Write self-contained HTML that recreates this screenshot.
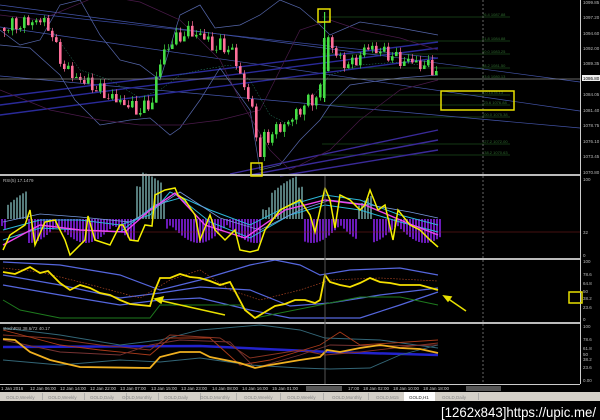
<!DOCTYPE html>
<html><head><meta charset="utf-8"><style>
html,body{margin:0;padding:0;background:#000;width:600px;height:420px;overflow:hidden}
svg{display:block}
text{font-family:"Liberation Sans",sans-serif}
</style></head><body>
<svg id="s" width="600" height="420" viewBox="0 0 600 420" xmlns="http://www.w3.org/2000/svg">
<rect width="600" height="420" fill="#000"/>
<g id="g"></g>
<g id="cand"></g>
<rect x="0" y="174" width="580" height="2" fill="#bbb"/>
<rect x="0" y="258" width="580" height="2" fill="#bbb"/>
<rect x="0" y="322" width="580" height="2" fill="#bbb"/>
<line x1="580.5" y1="0" x2="580.5" y2="384" stroke="#ccc" stroke-width="1"/>
<line x1="0" y1="384.5" x2="580" y2="384.5" stroke="#ccc"/>
<line x1="483" y1="0" x2="483" y2="384" stroke="#666" stroke-dasharray="2,2"/>
<line x1="325" y1="176" x2="325" y2="384" stroke="#555"/>
<line x1="0" y1="79" x2="580" y2="79" stroke="#888" stroke-width="0.7"/>
<g fill="none" stroke="#e8e000" stroke-width="1.5">
<rect x="318" y="9" width="12" height="13"/>
<rect x="251" y="163" width="11" height="13"/>
<rect x="441" y="91" width="73" height="19"/>
<rect x="569" y="292" width="13" height="11"/>
</g>
<g stroke="#e8e000" stroke-width="1.5">
<line x1="225" y1="315" x2="158" y2="300"/><polygon points="155,299 163,297 161,303" fill="#e8e000"/>
<line x1="466" y1="311" x2="447" y2="298"/><polygon points="444,296 451,297 448,301" fill="#e8e000"/>
</g>
<g font-size="4.5" fill="#bbb">
<text x="583" y="4">1099.85</text><text x="583" y="19">1097.20</text><text x="583" y="35">1094.60</text>
<text x="583" y="50">1092.00</text><text x="583" y="65">1089.35</text>
<rect x="582" y="75" width="18" height="6" fill="#eee"/><text x="583" y="80" fill="#000">1086.80</text>
<text x="583" y="96">1084.05</text><text x="583" y="112">1081.40</text><text x="583" y="127">1078.75</text>
<text x="583" y="143">1076.10</text><text x="583" y="158">1073.45</text><text x="583" y="174">1070.80</text>
<text x="583" y="181">100</text><text x="583" y="234">32</text><text x="583" y="257">0</text>
<text x="583" y="263">100</text><text x="583" y="276">78.6</text><text x="583" y="285">64.8</text><text x="583" y="293">50</text>
<text x="583" y="300">38.2</text><text x="583" y="309">23.6</text><text x="583" y="321">0</text>
<text x="583" y="328">100</text><text x="583" y="341">78.6</text><text x="583" y="350">61.8</text><text x="583" y="356">50</text>
<text x="583" y="361">38.2</text><text x="583" y="369">23.6</text><text x="583" y="382">0.00</text>
<text x="3" y="182">RSI(5) 17.1479</text>
<text x="3" y="330">stochRSI 38.6/72 40.17</text>
</g>
<g font-size="4.5" fill="#ccc">
<text x="1" y="390">1 Jan 2016</text><text x="30" y="390">12 Jan 06:00</text><text x="60" y="390">12 Jan 14:00</text>
<text x="90" y="390">12 Jan 22:00</text><text x="120" y="390">13 Jan 07:00</text><text x="151" y="390">13 Jan 15:00</text>
<text x="181" y="390">13 Jan 23:00</text><text x="212" y="390">14 Jan 08:00</text><text x="242" y="390">14 Jan 16:00</text>
<text x="272" y="390">15 Jan 01:00</text><rect x="306" y="386" width="36" height="5" fill="#555"/>
<text x="348" y="390">17:00</text><text x="363" y="390">18 Jan 02:00</text><text x="393" y="390">18 Jan 10:00</text>
<text x="423" y="390">18 Jan 18:00</text><rect x="466" y="386" width="35" height="5" fill="#555"/>
</g>
<rect x="0" y="392" width="600" height="9" fill="#d4d0c8"/>
<g font-size="4.5" fill="#888" id="tabs"></g>
<rect x="404" y="392" width="31" height="9" fill="#fff"/>
<text x="409" y="399" font-size="4.5" fill="#333">GOLD,H1</text>
<text x="441" y="417" font-size="14" fill="#fff" textLength="155" lengthAdjust="spacingAndGlyphs">[1262x843]https://upic.me/</text>
</svg>
<script>
(function(){
var NS="http://www.w3.org/2000/svg",G=document.getElementById('g'),C=document.getElementById('cand');
function pl(p,c,w,d,par){var e=document.createElementNS(NS,'polyline');e.setAttribute('points',p.map(function(a){return a.join(',')}).join(' '));e.setAttribute('fill','none');e.setAttribute('stroke',c);e.setAttribute('stroke-width',w||1);if(d)e.setAttribute('stroke-dasharray',d);(par||G).appendChild(e);}
function ln(a,b,c,d,col,w){pl([[a,b],[c,d]],col,w);}
function interp(k,x){for(var i=0;i<k.length-1;i++){if(x>=k[i][0]&&x<=k[i+1][0]){var t=(x-k[i][0])/(k[i+1][0]-k[i][0]);return k[i][1]+t*(k[i+1][1]-k[i][1]);}}return k[k.length-1][1];}
function rect(x,y,w,h,c,par){var e=document.createElementNS(NS,'rect');e.setAttribute('x',x);e.setAttribute('y',y);e.setAttribute('width',w);e.setAttribute('height',Math.max(h,0.5));e.setAttribute('fill',c);(par||G).appendChild(e);}
function txt(x,y,s,c,fs,par){var e=document.createElementNS(NS,'text');e.setAttribute('x',x);e.setAttribute('y',y);e.setAttribute('font-size',fs);e.setAttribute('fill',c);e.textContent=s;(par||G).appendChild(e);}
[[17,'76.4'],[41,'61.8'],[54,'50.0'],[68,'38.2'],[79,'23.6'],[95,'0.0'],[105,'-23.6'],[117,'100.0'],[144,'127.2'],[155,'138.2']].forEach(function(f){ln(322,f[0],510,f[0],'#1a4a1a',0.7);txt(482,f[0]-1,f[1]+' 10'+(90-f[0]/8).toFixed(2),'#2f6a2f',4);});
ln(0,5,580,82,'#4455aa',0.7);ln(0,27,580,111,'#4455aa',0.7);ln(0,76,580,128,'#4455aa',0.7);ln(0,10,438,58,'#3a4aa0',0.7);
ln(0,97,438,42,'#2a2a99',1.4);ln(0,105,438,48,'#2a2a99',1.4);ln(0,115,438,58,'#2a2a99',1.4);
ln(230,174,438,130,'#3a2a99',1.4);ln(250,175,438,140,'#3a2a99',1.4);ln(280,176,438,150,'#3a2a99',1.4);
pl([[0,30],[20,45],[40,40],[60,5],[80,0],[100,35],[120,60],[140,65],[160,80],[180,15],[200,5],[215,28],[240,25],[260,15],[280,0],[300,8],[320,25],[330,35],[360,22],[400,28],[438,35]],'#5566aa',0.7);
pl([[0,45],[30,48],[60,75],[75,100],[100,125],[130,120],[150,118],[170,135],[180,128],[200,100],[220,68],[250,110],[260,170],[280,165],[300,140],[320,120],[330,105],[350,85],[370,82],[400,78],[438,75]],'#5566aa',0.7);
pl([[0,15],[40,20],[100,-5],[140,2],[180,20],[220,60],[240,100],[255,125],[270,150],[290,170],[330,150],[360,120],[400,90],[438,80]],'#4a1a4a',0.7);
pl([[0,90],[50,110],[100,120],[140,125],[180,125],[220,120],[260,110],[300,30],[330,20],[360,30],[400,38],[438,50]],'#4a1a4a',0.7);
pl([[50,28],[80,70],[110,80],[140,98],[160,90],[180,75],[200,70],[230,65],[250,80],[270,115],[290,125],[310,100],[330,75],[360,65],[400,62],[438,68]],'#2a8a6a',0.5,'1.5,1.5');
var K=[[3,28],[20,24],[30,22],[40,20],[50,30],[55,50],[60,62],[70,75],[80,80],[90,85],[100,92],[110,98],[120,102],[130,107],[138,111],[145,107],[152,100],[155,80],[160,58],[165,48],[172,42],[180,35],[190,32],[200,36],[207,40],[213,50],[220,45],[227,48],[233,57],[238,70],[243,88],[248,100],[253,118],[256,140],[259,156],[262,140],[268,136],[274,130],[280,128],[286,122],[292,118],[298,110],[304,104],[310,100],[316,96],[322,82],[325,40],[328,38],[333,52],[338,60],[344,62],[350,66],[356,58],[362,52],[368,46],[374,50],[380,52],[386,53],[392,57],[398,60],[404,62],[410,60],[416,64],[422,66],[428,66],[434,70],[438,76]];
var prev=28;
for(var i=0;i<110;i++){var x=3+i*4;if(x>438)break;var c=interp(K,x)+Math.sin(i*2.3)*5+Math.cos(i*1.7)*3;var o=prev;var tp=Math.min(o,c),bt=Math.max(o,c);var col=c<o?'#44dd44':'#ff6f9a';rect(x+1,tp-Math.abs(Math.sin(i*3.1))*4-1,0.7,bt-tp+Math.abs(Math.cos(i*1.3))*5+2,col,C);rect(x,tp,2.6,bt-tp,col,C);prev=c;}
rect(324,12,1.2,90,'#44dd44',C);rect(323,38,2.6,60,'#44dd44',C);
var base=219;
for(var x2=1;x2<440;x2+=3){var h;if((x2>5&&x2<28)||(x2>133&&x2<165)||(x2>260&&x2<303)||(x2>355&&x2<372)){h=-(Math.abs(Math.sin(x2/28))*25+8);if(x2>140&&x2<162)h-=15;if(x2>270&&x2<298)h-=12;rect(x2,base+h,2,-h,'#557b7b');}else{h=Math.abs(Math.sin(x2/18))*18+6;rect(x2,base,2,h,'#6a1ab8');}}
ln(0,232,580,232,'#882222',0.6);
var Y=[[3,250],[10,235],[25,225],[30,210],[35,245],[45,222],[55,220],[65,240],[70,255],[85,240],[88,216],[95,240],[110,245],[120,225],[123,225],[130,240],[138,241],[145,225],[152,226],[155,195],[165,190],[175,188],[178,195],[185,200],[195,215],[200,240],[210,215],[215,230],[225,240],[235,230],[240,250],[250,252],[258,250],[265,230],[280,210],[300,200],[310,215],[315,232],[325,188],[330,200],[335,228],[340,195],[350,200],[360,210],[365,205],[370,190],[378,210],[385,205],[393,240],[398,210],[410,225],[420,230],[430,240],[438,247]];
pl([[3,240],[40,228],[80,230],[120,232],[155,205],[180,198],[210,222],[250,238],[290,215],[325,205],[360,210],[400,222],[438,232]],'#2cb7d8',1);
pl([[3,230],[40,220],[80,220],[120,225],[150,215],[170,192],[210,210],[250,225],[290,205],[325,195],[360,200],[400,215],[438,225]],'#2cb7d8',1);
pl([[3,222],[40,214],[80,217],[130,222],[160,205],[180,192],[220,218],[260,230],[300,210],[330,200],[370,205],[410,212],[438,218]],'#7799dd',0.8);
pl([[3,245],[40,225],[80,230],[125,232],[150,210],[175,193],[205,225],[245,238],[285,210],[325,200],[365,205],[405,222],[438,235]],'#ee44ee',1.4);
pl(Y,'#f5f000',1.5);
pl([[3,262],[60,265],[120,275],[160,290],[200,280],[250,265],[275,260],[300,265],[320,275],[350,270],[400,268],[438,275]],'#5566dd',1.2);
pl([[3,275],[60,285],[120,298],[160,293],[200,287],[250,290],[290,306],[330,303],[380,295],[438,288]],'#5566dd',1.2);
pl([[3,285],[60,295],[120,305],[160,300],[200,298],[250,310],[290,318],[360,318],[400,305],[438,292]],'#5566dd',1.2);
pl([[3,268],[40,272],[80,282],[140,298],[170,280],[200,270],[230,290],[260,300],[300,290],[330,280],[380,278],[438,281]],'#aa4422',0.7,'1.5,1.5');
pl([[3,300],[20,310],[60,318],[150,318],[160,305],[240,305],[255,318],[320,305],[360,297],[400,297],[438,305]],'#1e7a1e',1);
pl([[3,272],[15,274],[30,267],[40,273],[48,271],[60,283],[70,290],[80,285],[90,288],[100,293],[110,295],[120,300],[130,304],[140,305],[150,306],[155,290],[160,278],[170,278],[180,274],[190,277],[200,278],[210,281],[220,285],[230,282],[237,295],[245,310],[255,318],[265,312],[275,306],[285,304],[295,300],[305,300],[315,303],[320,300],[325,275],[330,282],[340,285],[350,287],[360,283],[370,278],[380,282],[390,283],[400,285],[420,285],[438,290]],'#f5e000',1.8);
pl([[3,347],[200,346],[330,352],[438,355]],'#2222cc',2.5);
pl([[3,328],[60,335],[120,345],[160,340],[200,330],[260,325],[300,330],[325,338],[380,340],[438,348]],'#336677',0.9);
pl([[3,335],[50,338],[100,345],[150,350],[170,335],[220,338],[250,358],[300,350],[325,355],[360,352],[438,343]],'#883322',0.9);
pl([[3,330],[60,345],[100,350],[150,355],[170,338],[210,338],[240,365],[270,360],[320,345],[340,332],[360,345],[438,340]],'#aa3a1a',0.9);
pl([[3,340],[60,352],[120,355],[150,345],[180,340],[230,342],[255,368],[300,355],[330,345],[380,346],[438,345]],'#773333',0.9);
pl([[3,360],[60,365],[120,360],[160,362],[200,358],[250,365],[300,368],[330,369],[370,368],[400,355],[438,345]],'#336677',0.9);
pl([[3,339],[15,340],[30,352],[50,360],[80,367],[150,368],[160,357],[180,352],[200,352],[210,357],[240,363],[255,368],[270,365],[300,360],[320,357],[327,350],[340,352],[360,348],[380,345],[400,348],[420,349],[438,353]],'#f0b020',1.8);
var T=document.getElementById('tabs');
['GOLD,Weekly','GOLD,Weekly','GOLD,Daily','GOLD,Monthly','GOLD,Daily','GOLD,Monthly','GOLD,Weekly','GOLD,Weekly','GOLD,Monthly','GOLD,M15','','GOLD,Daily'].forEach(function(s,i){var xs=[2,44,86,118,160,196,240,283,328,372,404,438][i];if(s){txt(xs+4,399,s,'#888',4.5,T);rect(xs+40,393,0.6,7,'#999',T);}});
})();
</script>
</body></html>
